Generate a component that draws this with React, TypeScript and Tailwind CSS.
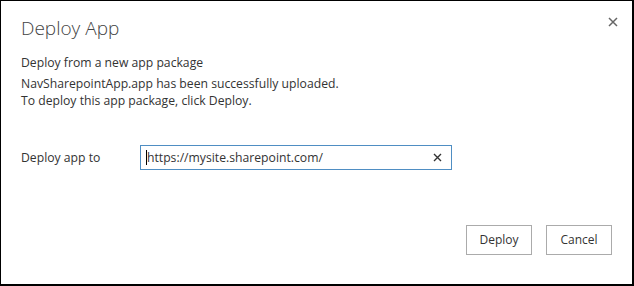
export default function App() {
  const font = { fontFamily: '"Open Sans", "Noto Sans", sans-serif' };

  return (
    <div
      className="w-[634px] h-[286px] bg-white border-l border-t border-r-2 border-b-2 border-black text-[#333] flex flex-col"
      style={font}
    >
      {/* Header */}
      <div className="flex justify-between items-start pl-[20px] pr-[14px] pt-[14px]">
        <h1 className="text-[19px] leading-[26px] font-light text-[#444]">Deploy App</h1>
        <button className="mt-[2px] w-[10px] h-[10px] flex items-center justify-center">
          <svg width="10" height="10" viewBox="0 0 10 10">
            <path d="M1 1 L9 9 M9 1 L1 9" stroke="#666" strokeWidth="1.5" />
          </svg>
        </button>
      </div>

      {/* Body */}
      <div className="pl-[20px] text-[12.2px] leading-[17px]">
        <p className="mt-[13px]">Deploy from a new app package</p>
        <p className="mt-[4px]">NavSharepointApp.app has been successfully uploaded.</p>
        <p>To deploy this app package, click Deploy.</p>

        <div className="flex items-center mt-[36px]">
          <label className="w-[119px]">Deploy app to</label>
          <div className="w-[312px] h-[25px] border border-[#4f8ec3] flex items-center pl-[5px] pr-[9px]">
            <span className="w-px h-[15px] bg-black" />
            <span className="flex-1">https://mysite.sharepoint.com/</span>
            <svg width="9" height="9" viewBox="0 0 9 9">
              <path d="M1 1 L8 8 M8 1 L1 8" stroke="#333" strokeWidth="1.4" />
            </svg>
          </div>
        </div>
      </div>

      {/* Footer */}
      <div className="flex justify-end gap-[14px] pr-[20px] mt-[55px] text-[12px]">
        <button className="w-[66px] h-[30px] border border-[#ababab] bg-white text-[#333]">Deploy</button>
        <button className="w-[66px] h-[30px] border border-[#ababab] bg-white text-[#333]">Cancel</button>
      </div>
    </div>
  );
}
